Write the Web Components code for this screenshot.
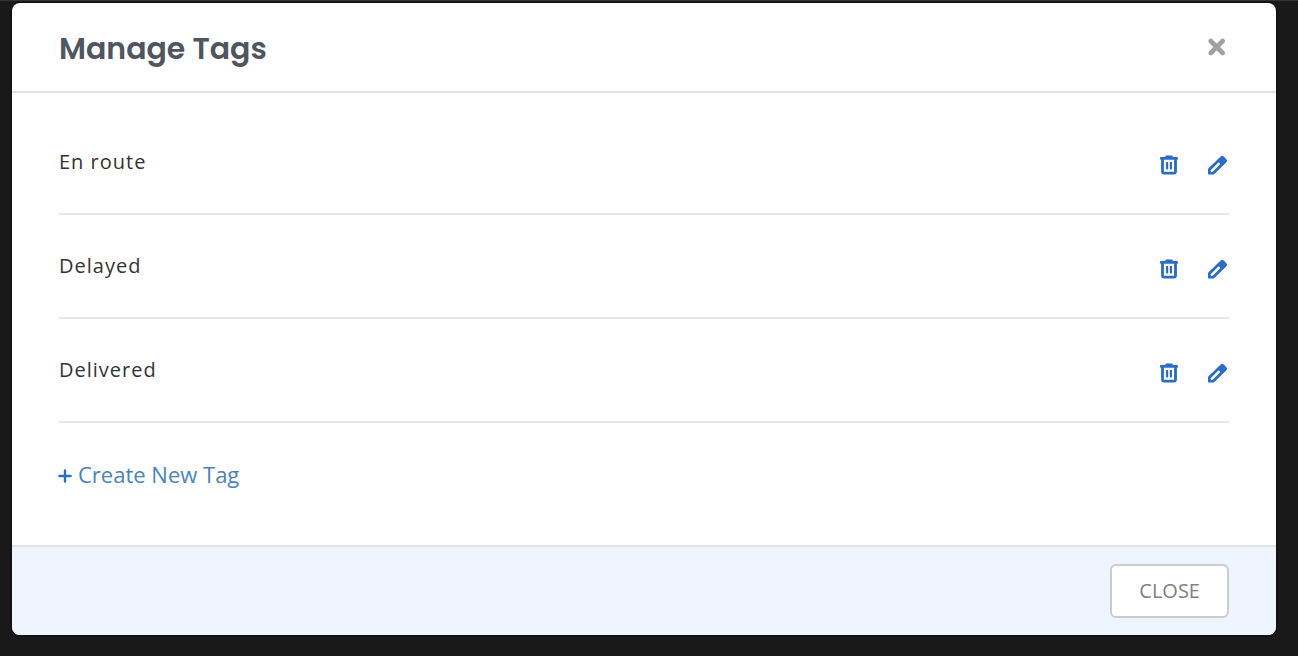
<!DOCTYPE html>
<html lang="en">
<head>
<meta charset="utf-8">
<title>Manage Tags</title>
<meta name="viewport" content="width=device-width, initial-scale=1">
<style>
  html { background: #191919; }
  body {
    margin: 0;
    padding: 2px 22px 21px 12px;
    border-top: 1px solid #333;
    font-family: "Open Sans", sans-serif;
    color: #333;
  }
</style>
</head>
<body>
<tag-dialog>
  <span slot="title">Manage Tags</span>
  <tag-row name="En route"></tag-row>
  <tag-row name="Delayed"></tag-row>
  <tag-row name="Delivered"></tag-row>
  <create-link slot="create">Create New Tag</create-link>
  <outline-button slot="actions">CLOSE</outline-button>
</tag-dialog>

<template id="tag-dialog">
  <style>
    :host { display: block; background: #fff; border-radius: 8px; overflow: hidden; box-shadow: 0 0 3px #000; }
    header, footer { display: flex; align-items: center; box-sizing: border-box; height: 90px; padding: 0 47px; }
    header { justify-content: space-between; border-bottom: 2px solid #e2e2e8; }
    h1 { margin: 0; padding-top: 4px; font: 600 30px/48px Poppins, sans-serif; color: #50565f; }
    main { padding: 18px 47px 55px; }
    .create { display: block; padding-top: 35px; }
    footer { justify-content: flex-end; background: #eef5fe; border-top: 2px solid #e2e2e8; }
  </style>
  <header>
    <h1><slot name="title"></slot></h1>
    <icon-button icon="close" label="Close dialog"></icon-button>
  </header>
  <main>
    <slot></slot>
    <div class="create"><slot name="create"></slot></div>
  </main>
  <footer><slot name="actions"></slot></footer>
</template>

<template id="tag-row">
  <style>
    :host { display: flex; align-items: center; justify-content: space-between; box-sizing: border-box; height: 104px; border-bottom: 2px solid #e6e6e6; }
    .name { font-size: 20px; line-height: 28px; letter-spacing: 1px; }
    .tools { display: flex; gap: 24px; padding-top: 6px; }
  </style>
  <span class="name"></span>
  <div class="tools">
    <icon-button icon="trash"></icon-button>
    <icon-button icon="pencil"></icon-button>
  </div>
</template>

<template id="icon-button">
  <style>
    :host { display: block; color: #2b6cc4; }
    :host([icon="close"]) { color: #a0a0a0; }
    button { display: flex; margin: 0; padding: 0; border: 0; background: none; color: inherit; cursor: pointer; }
    svg { width: 24px; height: 24px; }
  </style>
  <button type="button"></button>
</template>

<template id="create-link">
  <style>
    :host { display: block; }
    a { display: flex; width: fit-content; align-items: center; gap: 6px; color: #4b82bd; font-size: 22px; line-height: 32px; text-decoration: none; }
    svg { width: 13px; height: 14px; margin-top: 4px; color: #2b6cc4; overflow: visible; }
  </style>
  <a href="#create"><svg viewBox="0 0 13 14" aria-hidden="true"><path d="M6 1.500v11M.4 7h11.200" stroke="currentColor" stroke-width="2.400" stroke-linecap="round"/></svg><slot></slot></a>
</template>

<template id="outline-button">
  <style>
    :host { display: block; }
    button { display: block; margin: 0; padding: 11px 27px; border: 2px solid #ccc; border-radius: 6px; background: #fff; color: #808080; font: 400 20px/28px "Open Sans", sans-serif; cursor: pointer; }
  </style>
  <button type="button"><slot></slot></button>
</template>

<script>
  const icons = {
    close: '<svg viewBox="0 0 24 24" aria-hidden="true"><path d="M5.700 6l12 12M17.700 6l-12 12" stroke="currentColor" stroke-width="4.600" stroke-linecap="round"/></svg>',
    trash: '<svg viewBox="0 0 24 24" aria-hidden="true"><path d="M4.200 5.400h15.600M9.500 3.900h5" fill="none" stroke="currentColor" stroke-width="2.600" stroke-linecap="round"/><path d="M5.500 6v12.500a1.600 1.600 0 0 0 1.600 1.600h9.800a1.600 1.600 0 0 0 1.600-1.600V6" fill="none" stroke="currentColor" stroke-width="2.800"/><path d="M10.100 9.800v5.800M13.900 9.800v5.800" stroke="currentColor" stroke-width="2.200" stroke-linecap="round"/></svg>',
    pencil: '<svg viewBox="0 0 24 24" aria-hidden="true"><path fill="currentColor" fill-rule="evenodd" d="M15.700 3.500a2.200 2.200 0 0 1 3 0l2.700 2.700a2.200 2.200 0 0 1 0 3L9.700 20.700a2.600 2.600 0 0 1-1.800.9H4.200A1.200 1.200 0 0 1 3 20.400v-3.500a2.600 2.600 0 0 1 .8-1.800zM12.900 10l-7 7a1.200 1.200 0 0 0 1.800 1.800l7-7a1.200 1.200 0 0 0-1.800-1.800z"/></svg>'
  };

  class TemplateElement extends HTMLElement {
    constructor() {
      super();
      this.attachShadow({ mode: 'open' })
        .append(document.getElementById(this.localName).content.cloneNode(true));
    }
  }

  customElements.define('icon-button', class extends TemplateElement {
    static observedAttributes = ['icon', 'label'];
    attributeChangedCallback() {
      const button = this.shadowRoot.querySelector('button');
      button.innerHTML = icons[this.getAttribute('icon')] || '';
      button.setAttribute('aria-label', this.getAttribute('label') || '');
    }
  });
  customElements.define('tag-row', class extends TemplateElement {
    connectedCallback() {
      const name = this.getAttribute('name');
      this.shadowRoot.querySelector('.name').textContent = name;
      const [remove, edit] = this.shadowRoot.querySelectorAll('icon-button');
      remove.setAttribute('label', 'Delete ' + name);
      edit.setAttribute('label', 'Edit ' + name);
    }
  });
  customElements.define('create-link', class extends TemplateElement {});
  customElements.define('outline-button', class extends TemplateElement {});
  customElements.define('tag-dialog', class extends TemplateElement {});
</script>
</body>
</html>
